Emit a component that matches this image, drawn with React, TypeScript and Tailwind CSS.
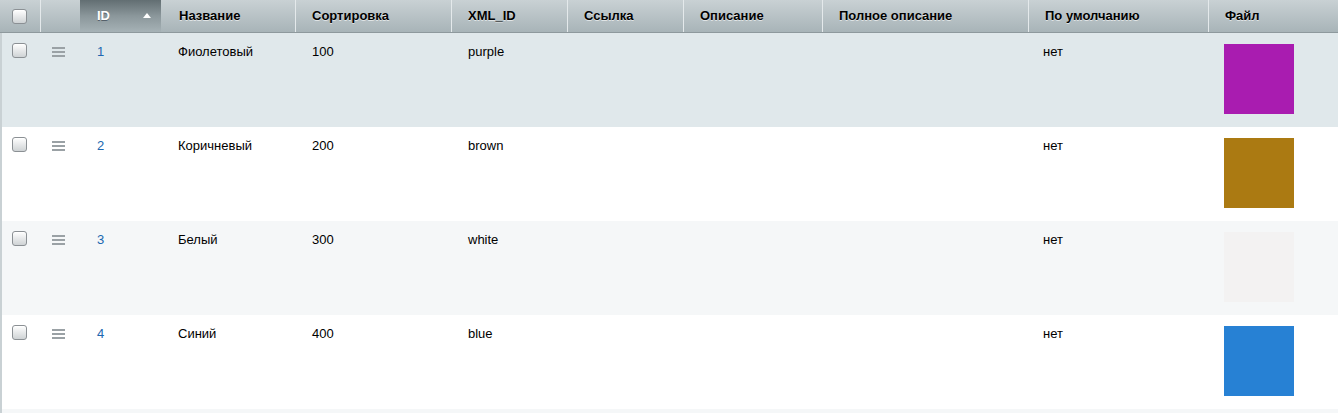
import React from 'react';

type Row = { id: number; name: string; sort: number; xml: string; def: string; color: string; bg: string };

const rows: Row[] = [
  { id: 1, name: 'Фиолетовый', sort: 100, xml: 'purple', def: 'нет', color: '#a91cb0', bg: 'bg-[#e0e8eb]' },
  { id: 2, name: 'Коричневый', sort: 200, xml: 'brown', def: 'нет', color: '#ab7a12', bg: 'bg-white' },
  { id: 3, name: 'Белый', sort: 300, xml: 'white', def: 'нет', color: '#f3f2f2', bg: 'bg-[#f5f7f8]' },
  { id: 4, name: 'Синий', sort: 400, xml: 'blue', def: 'нет', color: '#2781d4', bg: 'bg-white' },
];

const cols = 'grid grid-cols-[40px_40px_81px_134px_156px_116px_116px_139px_206px_180px_1fr]';
// body sits inside a 2px left border, so the first column is 2px narrower
const bodyCols = 'grid grid-cols-[38px_40px_81px_134px_156px_116px_116px_139px_206px_180px_1fr]';

const Checkbox = () => (
  <div className="w-[15px] h-[15px] rounded-[3px] border border-[#8b9094] bg-gradient-to-b from-white to-[#cfd3d5] shadow-[inset_0_1px_0_#fff]" />
);

const DragHandle = () => (
  <div className="flex flex-col gap-[2px] w-[13px]">
    <div className="h-[2px] bg-[#9aa1a5]" />
    <div className="h-[2px] bg-[#9aa1a5]" />
    <div className="h-[2px] bg-[#9aa1a5]" />
  </div>
);

const headers = ['Название', 'Сортировка', 'XML_ID', 'Ссылка', 'Описание', 'Полное описание', 'По умолчанию', 'Файл'];

export default function App() {
  return (
    <div className="w-[1338px] h-[413px] overflow-hidden bg-white text-[13px] text-black" style={{ fontFamily: '"Liberation Sans", Arial, sans-serif' }}>
      {/* header */}
      <div className={`${cols} h-[33px] border-b border-[#8e999d] bg-gradient-to-b from-[#c9d1d4] to-[#a8b4b8] font-bold`}>
        <div className="flex items-center pl-3">
          <Checkbox />
        </div>
        <div className="border-l border-[#e4e9eb]" />
        <div className="relative flex items-center pl-[17px] bg-gradient-to-b from-[#626e72] via-[#8b979b] to-[#a6b2b6] text-white [text-shadow:0_1px_0_#55606a]">
          ID
          <span className="absolute left-[63px] top-[13px] w-0 h-0 border-l-[4px] border-r-[4px] border-b-[5px] border-l-transparent border-r-transparent border-b-white" />
        </div>
        {headers.map((h, i) => (
          <div key={h} className={`flex items-center [text-shadow:0_1px_0_rgba(255,255,255,0.6)] ${i === 0 ? 'pl-[18px]' : 'pl-[16px] border-l border-[#e4e9eb]'}`}>
            {h}
          </div>
        ))}
      </div>

      {/* rows */}
      <div className="border-l-2 border-[#c9d1d4]">
        {rows.map((r) => (
          <div key={r.id} className={`${bodyCols} h-[94px] ${r.bg}`}>
            <div className="pl-[10px] pt-[10px]">
              <Checkbox />
            </div>
            <div className="pl-[12px] pt-[14px]">
              <DragHandle />
            </div>
            <div className="pl-[17px] pt-[11px] leading-[16px] text-[#2067b0]">{r.id}</div>
            <div className="pl-[17px] pt-[11px] leading-[16px]">{r.name}</div>
            <div className="pl-[17px] pt-[11px] leading-[16px]">{r.sort}</div>
            <div className="pl-[17px] pt-[11px] leading-[16px]">{r.xml}</div>
            <div />
            <div />
            <div />
            <div className="pl-[15px] pt-[11px] leading-[16px]">{r.def}</div>
            <div className="pl-[16px] pt-[11px]">
              <div className="w-[70px] h-[70px]" style={{ backgroundColor: r.color }} />
            </div>
          </div>
        ))}
        <div className="h-[10px] bg-[#f5f7f8]" />
      </div>
    </div>
  );
}
